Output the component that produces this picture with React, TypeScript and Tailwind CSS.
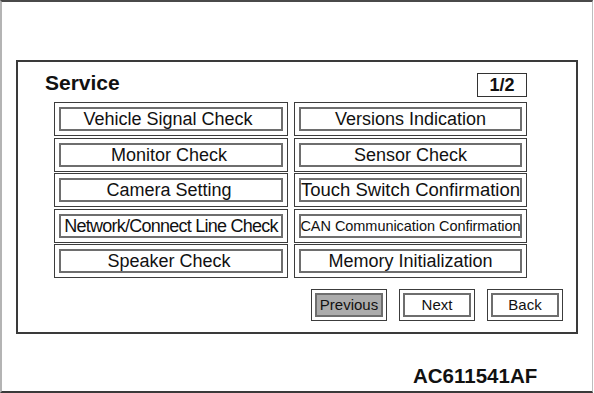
import React from 'react';

type Item = { label: string; cls?: string };

const leftItems: Item[] = [
  { label: 'Vehicle Signal Check', cls: 'text-[18px] -translate-x-[3px]' },
  { label: 'Monitor Check', cls: 'text-[18px] -translate-x-[2px]' },
  { label: 'Camera Setting', cls: 'text-[18px] -translate-x-[2px]' },
  { label: 'Network/Connect Line Check', cls: 'text-[18px] tracking-[-0.75px]' },
  { label: 'Speaker Check', cls: 'text-[18px] -translate-x-[2px]' },
];

const rightItems: Item[] = [
  { label: 'Versions Indication', cls: 'text-[18px]' },
  { label: 'Sensor Check', cls: 'text-[18px]' },
  { label: 'Touch Switch Confirmation', cls: 'text-[18.5px]' },
  { label: 'CAN Communication Confirmation', cls: 'text-[14.5px] tracking-[-0.05px]' },
  { label: 'Memory Initialization', cls: 'text-[18px]' },
];

const MenuButton: React.FC<Item> = ({ label, cls }) => (
  <div className="h-[34px] border border-[#3c3c3c] p-[4px] bg-white">
    <div className="h-full border-2 border-[#6e6e6e] flex items-center justify-center">
      <span className={`whitespace-nowrap leading-[20px] text-[#111] ${cls ?? ''}`}>{label}</span>
    </div>
  </div>
);

const NavButton: React.FC<{ label: string; active?: boolean }> = ({ label, active }) => (
  <div className="w-[76px] h-[32px] border border-[#3c3c3c] p-[3px] bg-white">
    <div
      className={`h-full border-2 border-[#6e6e6e] flex items-center justify-center ${
        active ? 'bg-[#ababab]' : 'bg-white'
      }`}
    >
      <span className="text-[15px] leading-[18px] text-[#111]">{label}</span>
    </div>
  </div>
);

export default function App() {
  // left column first, then right, row by row
  const rows = leftItems.map((l, i) => [l, rightItems[i]]).flat();

  return (
    <div
      className="w-[594px] h-[393px] bg-white"
      style={{ fontFamily: '"Liberation Sans", Arial, sans-serif' }}
    >
      <div className="w-[593px] h-[393px] border-t-2 border-b-2 border-t-[#4a4a4a] border-b-[#3a3a3a] border-l-2 border-l-[#b4b4b4] border-r border-r-[#bdbdbd] flex flex-col">
        {/* service panel */}
        <div className="ml-[14px] mt-[58px] w-[562px] h-[274px] border-2 border-[#3a3a3a]">
          <div className="ml-[36px] mt-[9px] w-[473px]">
            <div className="flex items-start justify-between h-[26px]">
              <span className="-ml-[9px] text-[21px] leading-[24px] font-bold text-[#111]">Service</span>
              <div className="mt-[2px] w-[50px] h-[24px] border-[1.5px] border-[#333] flex items-center justify-center">
                <span className="text-[18px] leading-[20px] font-bold text-[#111]">1/2</span>
              </div>
            </div>
            <div className="mt-[5px] grid grid-cols-[234px_233px] gap-x-[6px] gap-y-[1.5px]">
              {rows.map((r) => (
                <MenuButton key={r.label} label={r.label} cls={r.cls} />
              ))}
            </div>
          </div>
          <div className="ml-[293px] mt-[11px] flex gap-[12px]">
            <NavButton label="Previous" active />
            <NavButton label="Next" />
            <NavButton label="Back" />
          </div>
        </div>

        <div className="mt-[30px] ml-[411px] text-[20.5px] leading-[24px] font-bold text-[#111]">AC611541AF</div>
      </div>
    </div>
  );
}
